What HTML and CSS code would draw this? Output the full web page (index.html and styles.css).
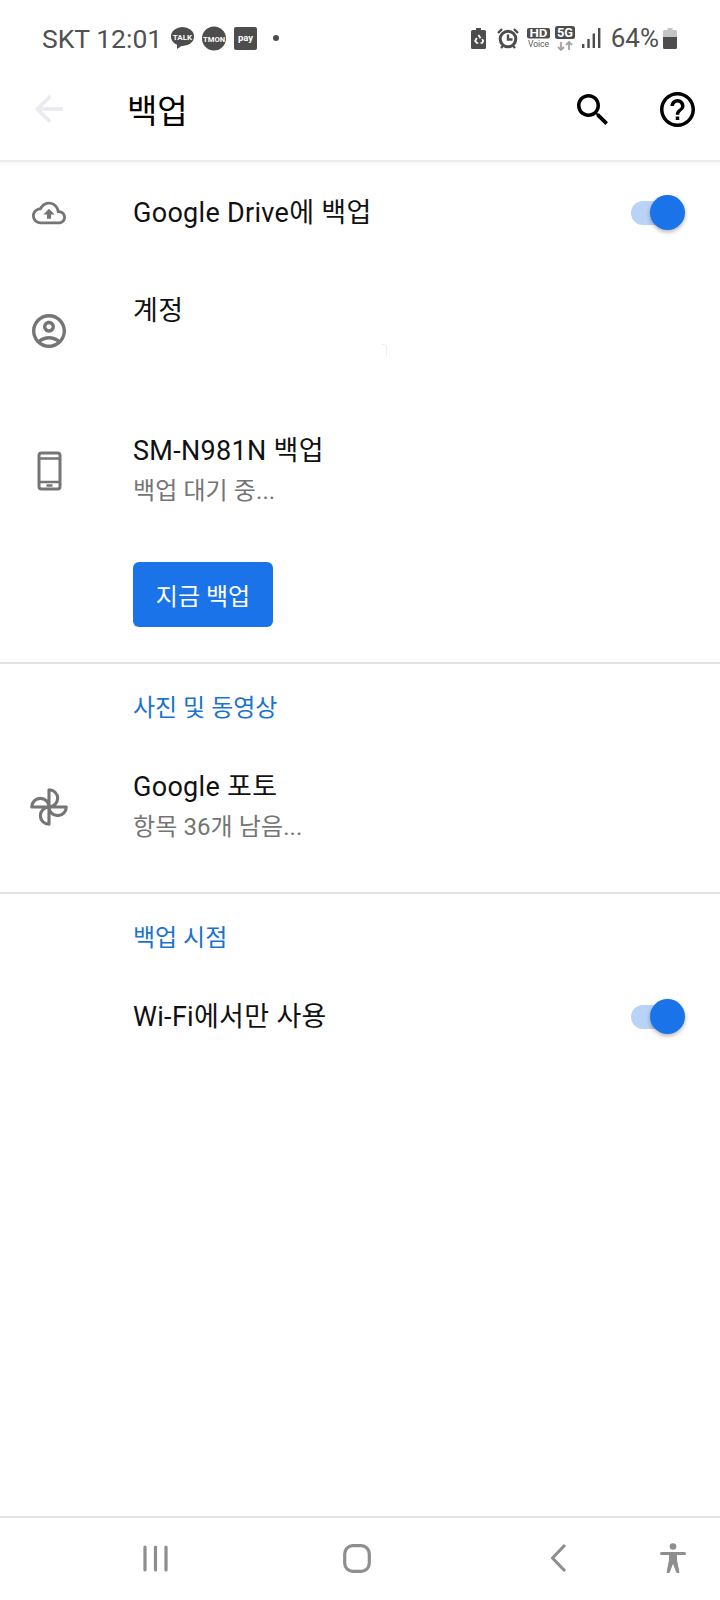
FILE: index.html
```html
<!DOCTYPE html>
<html lang="ko">
<head>
  <meta charset="UTF-8">
  <meta name="viewport" content="width=device-width, initial-scale=1.0">
  <title>백업</title>
  <link rel="stylesheet" href="styles.css">
</head>
<body>
  <div class="status-bar">
    <span class="status-text">SKT 12:01</span>
    <svg class="st-talk" width="23" height="22" viewBox="0 0 23 22">
      <ellipse cx="11.5" cy="9.5" rx="11.5" ry="9.5" fill="#4d4d4d"/>
      <path d="M6 16l0 6 6-4z" fill="#4d4d4d"/>
      <text x="11.5" y="12.5" text-anchor="middle" class="badge-text" font-size="8">TALK</text>
    </svg>
    <svg class="st-tmon" width="24" height="25" viewBox="0 0 24 25">
      <circle cx="12" cy="12.5" r="12" fill="#4d4d4d"/>
      <text x="12" y="15.5" text-anchor="middle" class="badge-text" font-size="8" font-weight="900" textLength="22" lengthAdjust="spacingAndGlyphs">TMON</text>
    </svg>
    <svg class="st-pay" width="23" height="23" viewBox="0 0 23 23">
      <rect width="23" height="23" rx="2" fill="#4d4d4d"/>
      <text x="11.5" y="14" text-anchor="middle" class="badge-text" font-size="9.5">pay</text>
    </svg>
    <span class="status-dot"></span>

    <div class="status-right">
      <svg class="st-recycle" width="15" height="21" viewBox="0 0 15 21">
        <path d="M5 0h5v2h3.500A1.500 1.500 0 0 1 15 3.500V19.500A1.500 1.500 0 0 1 13.500 21H1.500A1.500 1.500 0 0 1 0 19.500V3.500A1.500 1.500 0 0 1 1.500 2H5z" fill="#4d4d4d"/>
        <path d="M7.500 7l2 3.200M5.800 10l-1.600 3 1.600 2h1.500M9.500 15h1.700l1-2-1-1.800" fill="none" stroke="#fff" stroke-width="1.700"/>
      </svg>
      <svg class="st-alarm" width="22" height="21" viewBox="0 0 22 21">
        <circle cx="11" cy="11" r="7.800" fill="none" stroke="#4d4d4d" stroke-width="3"/>
        <path d="M11 6.500V11.500H15.500" fill="none" stroke="#4d4d4d" stroke-width="2.400"/>
        <path d="M1 5l4-4M21 5l-4-4M4 20l2-2M18 20l-2-2" stroke="#4d4d4d" stroke-width="2.400"/>
      </svg>
      <svg class="st-hd" width="23" height="20" viewBox="0 0 23 20">
        <rect width="23" height="10.500" rx="2" fill="#4d4d4d"/>
        <text x="11.500" y="9" text-anchor="middle" class="badge-text" font-size="10" textLength="18" lengthAdjust="spacingAndGlyphs">HD</text>
        <text x="11.500" y="19" text-anchor="middle" class="voice-text" font-size="8.500">Voice</text>
      </svg>
      <svg class="st-5g" width="20" height="25" viewBox="0 0 20 25">
        <rect width="20" height="13" rx="2.500" fill="#4d4d4d"/>
        <text x="10" y="11" text-anchor="middle" class="badge-text" font-size="12.500" font-weight="700" textLength="16" lengthAdjust="spacingAndGlyphs">5G</text>
        <path d="M6 16v8M3 21l3 3 3-3M14 24v-8M11 19l3-3 3 3" fill="none" stroke="#a3a3a3" stroke-width="1.800"/>
      </svg>
      <svg class="st-signal" width="19" height="20" viewBox="0 0 19 20">
        <rect x="0" y="16" width="2.400" height="4" fill="#4d4d4d"/>
        <rect x="5.300" y="11" width="2.400" height="9" fill="#4d4d4d"/>
        <rect x="10.600" y="5.500" width="2.400" height="14.500" fill="#4d4d4d"/>
        <rect x="16" y="0" width="2.400" height="20" fill="#4d4d4d"/>
      </svg>
      <span class="status-text st-percent">64%</span>
      <svg class="st-battery" width="14" height="21" viewBox="0 0 14 21">
        <path d="M4.500 0h5v2H12.500A1.500 1.500 0 0 1 14 3.500V9H0V3.500A1.500 1.500 0 0 1 1.500 2H4.500z" fill="#c4c4c4"/>
        <path d="M0 9H14V19.500A1.500 1.500 0 0 1 12.500 21H1.500A1.500 1.500 0 0 1 0 19.500z" fill="#4d4d4d"/>
      </svg>
    </div>
  </div>

  <header class="app-bar">
    <svg class="back-icon" width="28" height="28" viewBox="4 4 16 16">
      <path d="M20 11H7.830l5.590-5.590L12 4l-8 8 8 8 1.410-1.410L7.830 13H20v-2z"/>
    </svg>
    <h1>백업</h1>
    <svg class="search-icon" width="31" height="31" viewBox="3 3 17.500 17.500">
      <path d="M15.500 14h-.79l-.28-.27C15.410 12.590 16 11.110 16 9.500 16 5.910 13.090 3 9.500 3S3 5.910 3 9.500 5.910 16 9.500 16c1.610 0 3.090-.59 4.230-1.570l.27.28v.79l5 4.990L20.490 19l-4.990-5zm-6 0C7.010 14 5 11.990 5 9.500S7.010 5 9.500 5 14 7.010 14 9.500 11.990 14 9.500 14z"/>
    </svg>
    <svg class="help-icon" width="35" height="35" viewBox="2 2 20 20">
      <path d="M11 18h2v-2h-2v2zm1-16C6.480 2 2 6.480 2 12s4.480 10 10 10 10-4.480 10-10S17.520 2 12 2zm0 18c-4.410 0-8-3.590-8-8s3.590-8 8-8 8 3.590 8 8-3.590 8-8 8zm0-14c-2.210 0-4 1.790-4 4h2c0-1.100.9-2 2-2s2 .9 2 2c0 2-3 1.750-3 5h2c0-2.250 3-2.500 3-5 0-2.210-1.790-4-4-4z"/>
    </svg>
  </header>

  <main class="content">
    <section class="section section-backup">
      <div class="row row-drive">
        <div class="row-icon">
          <svg width="34" height="34" viewBox="0 0 24 24">
            <path d="M19.350 10.040C18.670 6.590 15.640 4 12 4 9.110 4 6.600 5.640 5.350 8.040 2.340 8.360 0 10.910 0 14c0 3.310 2.690 6 6 6h13c2.760 0 5-2.240 5-5 0-2.640-2.050-4.780-4.650-4.960zM19 18H6c-2.210 0-4-1.790-4-4 0-2.050 1.530-3.760 3.560-3.970l1.070-.11.5-.95C8.080 7.140 9.940 6 12 6c2.620 0 4.880 1.860 5.390 4.430l.3 1.500 1.530.11c1.560.1 2.780 1.410 2.780 2.960 0 1.650-1.350 3-3 3zM8 13h2.550v3h2.900v-3H16l-4-4z"/>
          </svg>
        </div>
        <div class="row-title">Google Drive에 백업</div>
        <div class="switch"><span class="switch-thumb"></span></div>
      </div>

      <div class="row row-account">
        <div class="row-icon">
          <svg width="34" height="34" viewBox="2 2 20 20">
            <path d="M12 2C6.480 2 2 6.480 2 12s4.480 10 10 10 10-4.480 10-10S17.520 2 12 2zM7.350 18.500C8.660 17.560 10.260 17 12 17s3.340.56 4.650 1.500c-1.310.94-2.910 1.500-4.650 1.500s-3.340-.56-4.650-1.500zm10.790-1.380C16.450 15.800 14.320 15 12 15s-4.450.8-6.140 2.120C4.700 15.730 4 13.950 4 12c0-4.420 3.580-8 8-8s8 3.580 8 8c0 1.950-.7 3.730-1.860 5.120zM12 6c-1.930 0-3.500 1.570-3.500 3.500S10.070 13 12 13s3.500-1.570 3.500-3.500S13.930 6 12 6zm0 5c-.83 0-1.500-.67-1.500-1.500S11.170 8 12 8s1.500.67 1.500 1.500S12.830 11 12 11z"/>
          </svg>
        </div>
        <div class="row-text">
          <div class="row-title">계정</div>
          <div class="row-sub"><span class="erased-mark"></span></div>
        </div>
      </div>

      <div class="row row-device">
        <div class="row-icon">
          <svg width="25" height="40" viewBox="0 0 25 40">
            <rect x="2" y="2" width="21" height="36" rx="2.500" fill="none" stroke="#757575" stroke-width="3"/>
            <path d="M2 7.500H23M2 31H23M9.500 34.500H15.500" stroke="#757575" stroke-width="2.400"/>
          </svg>
        </div>
        <div class="row-text">
          <div class="row-title">SM-N981N 백업</div>
          <div class="row-sub">백업 대기 중...</div>
        </div>
      </div>

      <button class="backup-btn">지금 백업</button>
    </section>

    <section class="section section-photos">
      <h2 class="section-label">사진 및 동영상</h2>
      <div class="row row-photos">
        <div class="row-icon">
          <svg width="38" height="38" viewBox="1 1 22 22">
            <path d="M12 12V2A5 5 0 0 1 12 12H22A5 5 0 0 1 12 12V22A5 5 0 0 1 12 12H2A5 5 0 0 1 12 12z" fill="none" stroke="#757575" stroke-width="1.800" stroke-linejoin="round"/>
          </svg>
        </div>
        <div class="row-text">
          <div class="row-title">Google 포토</div>
          <div class="row-sub">항목 36개 남음...</div>
        </div>
      </div>
    </section>

    <section class="section-when">
      <h2 class="section-label">백업 시점</h2>
      <div class="row row-wifi">
        <div class="row-icon"></div>
        <div class="row-title">Wi-Fi에서만 사용</div>
        <div class="switch"><span class="switch-thumb"></span></div>
      </div>
    </section>
  </main>

  <nav class="nav-bar">
    <svg class="nav-recents" width="25" height="27" viewBox="0 0 25 27">
      <path d="M2 2V25M12.500 2V25M23 2V25" stroke="#8e8e8e" stroke-width="3.200" stroke-linecap="round"/>
    </svg>
    <svg class="nav-home" width="28" height="29" viewBox="0 0 28 29">
      <rect x="1.700" y="1.700" width="24.600" height="25.600" rx="8" fill="none" stroke="#8e8e8e" stroke-width="3.200"/>
    </svg>
    <svg class="nav-back" width="16" height="28" viewBox="0 0 16 28">
      <path d="M14 2L2.500 14 14 26" fill="none" stroke="#8e8e8e" stroke-width="3.200" stroke-linecap="round" stroke-linejoin="round"/>
    </svg>
    <svg class="nav-person" width="26" height="31" viewBox="0 0 26 31">
      <circle cx="13" cy="3.500" r="3.300" fill="#8e8e8e"/>
      <path d="M1.500 10.500H24.500" stroke="#8e8e8e" stroke-width="3" stroke-linecap="round"/>
      <path d="M9.500 10H16.500V17L19 29.500H16.800L13 19.500 9.200 29.500H7L9.500 17z" fill="#8e8e8e" stroke="#8e8e8e" stroke-linejoin="round"/>
    </svg>
  </nav>
</body>
</html>
```

FILE: styles.css
```css
* {
  box-sizing: border-box;
}
body {
  margin: 0;
  width: 720px;
  height: 1600px;
  display: flex;
  flex-direction: column;
  background-color: #fff;
  color: #111;
  font-family: Roboto, "Noto Sans CJK KR", sans-serif;
  overflow: hidden;
}
svg {
  display: block;
  flex: none;
}

/* status bar */
.status-bar {
  height: 76px;
  padding: 0 43px 0 42px;
  display: flex;
  align-items: center;
}
.status-text {
  font-size: 26.5px;
  color: #505050;
}
.badge-text {
  fill: #fff;
  font-family: Roboto, sans-serif;
  font-weight: 700;
}
.voice-text {
  fill: #5a5a5a;
  font-family: Roboto, sans-serif;
}
.st-talk { margin-left: 9px; }
.st-tmon { margin-left: 8px; }
.st-pay { margin-left: 8px; }
.status-dot {
  width: 6px;
  height: 6px;
  margin-left: 16px;
  border-radius: 50%;
  background-color: #4d4d4d;
}
.status-right {
  margin-left: auto;
  display: flex;
  align-items: center;
}
.st-alarm { margin-left: 11px; }
.st-hd { margin-left: 8px; }
.st-5g { margin-left: 5px; }
.st-signal { margin-left: 7px; }
.st-percent {
  margin-left: 10px;
  font-size: 26px;
}
.st-battery { margin-left: 4px; }

/* app bar */
.app-bar {
  height: 86px;
  padding: 0 25px 18px 35px;
  display: flex;
  align-items: center;
  border-bottom: 2px solid #ececec;
  box-shadow: 0 2px 3px rgba(0, 0, 0, 0.04);
}
.app-bar h1 {
  flex: 1;
  margin: 0 0 0 64px;
  font-size: 33px;
  font-weight: 400;
  color: #000;
}
.back-icon { fill: #e8eaf0; }
.search-icon { fill: #000; }
.help-icon {
  margin-left: 52px;
  fill: #000;
}

/* rows */
.content {
  flex: 1;
}
.section {
  border-bottom: 2px solid #e2e2e2;
}
.section-backup {
  padding-bottom: 35px;
}
.section-photos {
  padding-bottom: 3px;
}
.row {
  display: flex;
  align-items: center;
  padding-right: 35px;
}
.row-drive { height: 100px; }
.row-account { height: 138px; }
.row-device { height: 142px; }
.row-photos { height: 164px; }
.row-wifi { height: 122px; }
.row-icon {
  width: 98px;
  margin-right: 35px;
  display: flex;
  justify-content: center;
  flex: none;
  fill: #757575;
}
.row-drive .row-icon {
  margin-top: 2px;
}
.row-title {
  font-size: 27px;
  line-height: 34px;
  letter-spacing: 0.3px;
  color: #111;
}
.row-drive .row-title,
.row-wifi .row-title {
  flex: 1;
  padding-top: 2px;
}
.row-sub {
  height: 34px;
  margin-top: 6px;
  font-size: 24px;
  line-height: 34px;
  letter-spacing: 0.1px;
  color: #757575;
}
.erased-mark {
  display: block;
  width: 5px;
  height: 12px;
  margin-left: 249px;
  transform: translateY(10px);
  border-top: 1px solid #eee;
  border-right: 1px solid #eee;
  border-top-right-radius: 4px;
}
.switch {
  width: 41px;
  height: 24px;
  position: relative;
  margin: 2px 13px 0 0;
  border-radius: 12px;
  background-color: #b9d3f7;
}
.switch-thumb {
  position: absolute;
  top: -6px;
  right: -13px;
  width: 35px;
  height: 35px;
  border-radius: 50%;
  background-color: #1a73e8;
  box-shadow: 0 2px 4px rgba(0, 0, 0, 0.3);
}
.backup-btn {
  display: block;
  width: 140px;
  height: 65px;
  margin: 20px 0 0 133px;
  padding: 0;
  border: none;
  border-radius: 6px;
  background-color: #1a73e8;
  color: #fff;
  font-family: inherit;
  font-size: 24px;
  font-weight: 400;
}
.section-label {
  margin: 0;
  padding: 27px 0 0 133px;
  font-size: 24px;
  font-weight: 400;
  line-height: 34px;
  color: #1a73d0;
}

/* nav bar */
.nav-bar {
  height: 84px;
  padding-bottom: 2px;
  display: flex;
  align-items: center;
  border-top: 2px solid #e4e4e4;
}
.nav-recents { margin-left: 143px; }
.nav-home { margin-left: 175px; }
.nav-back { margin-left: 179px; }
.nav-person { margin-left: 94px; }
```
